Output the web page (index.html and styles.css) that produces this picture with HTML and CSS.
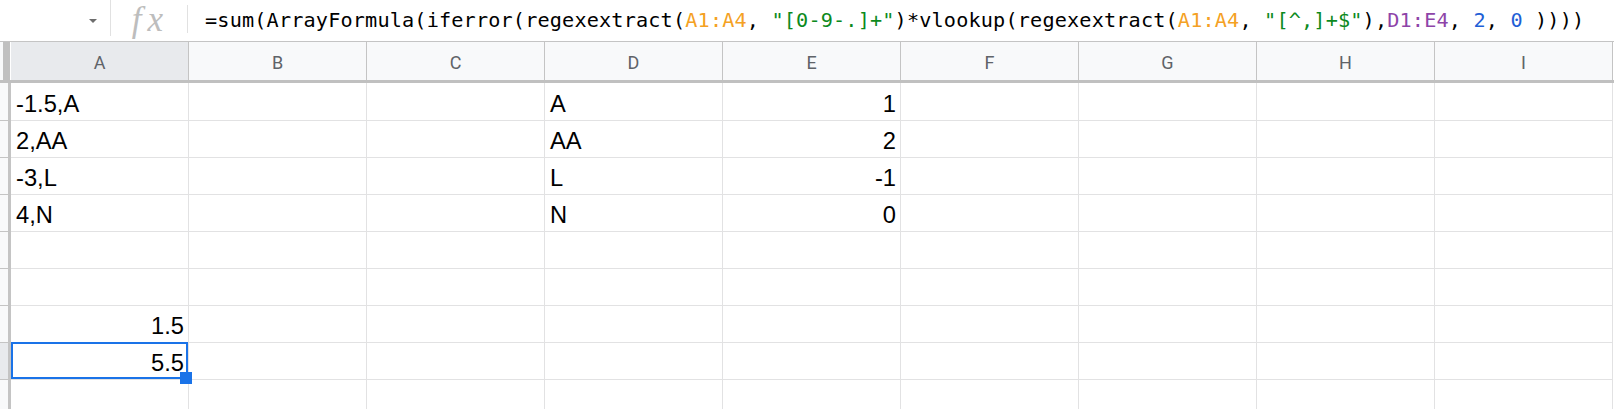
FILE: index.html
```html
<!DOCTYPE html>
<html lang="en">
<head>
    <meta charset="UTF-8">
    <title>Sheet</title>
    <link rel="stylesheet" href="styles.css">
</head>
<body>
    <div class="formula-bar">
        <div class="name-box"><span class="caret"></span></div>
        <div class="fx">fx</div>
        <div class="divider"></div>
        <div class="formula">=sum(ArrayFormula(iferror(regexextract(<b class="r1">A1:A4</b>, <b class="str">"[0-9-.]+"</b>)*vlookup(regexextract(<b class="r1">A1:A4</b>, <b class="str">"[^,]+$"</b>),<b class="r2">D1:E4</b>, <b class="num">2</b>, <b class="num">0</b> ))))</div>
    </div>

    <div class="sheet">
        <div class="row head">
            <div class="rh corner"></div>
            <div class="ch active">A</div>
            <div class="ch">B</div>
            <div class="ch">C</div>
            <div class="ch">D</div>
            <div class="ch">E</div>
            <div class="ch">F</div>
            <div class="ch">G</div>
            <div class="ch">H</div>
            <div class="ch">I</div>
        </div>
        <div class="row first">
            <div class="rh"></div>
            <div class="cell">-1.5,A</div>
            <div class="cell"></div><div class="cell"></div>
            <div class="cell">A</div>
            <div class="cell num">1</div>
            <div class="cell"></div><div class="cell"></div><div class="cell"></div><div class="cell"></div>
        </div>
        <div class="row">
            <div class="rh"></div>
            <div class="cell">2,AA</div>
            <div class="cell"></div><div class="cell"></div>
            <div class="cell">AA</div>
            <div class="cell num">2</div>
            <div class="cell"></div><div class="cell"></div><div class="cell"></div><div class="cell"></div>
        </div>
        <div class="row">
            <div class="rh"></div>
            <div class="cell">-3,L</div>
            <div class="cell"></div><div class="cell"></div>
            <div class="cell">L</div>
            <div class="cell num">-1</div>
            <div class="cell"></div><div class="cell"></div><div class="cell"></div><div class="cell"></div>
        </div>
        <div class="row">
            <div class="rh"></div>
            <div class="cell">4,N</div>
            <div class="cell"></div><div class="cell"></div>
            <div class="cell">N</div>
            <div class="cell num">0</div>
            <div class="cell"></div><div class="cell"></div><div class="cell"></div><div class="cell"></div>
        </div>
        <div class="row">
            <div class="rh"></div>
            <div class="cell"></div><div class="cell"></div><div class="cell"></div><div class="cell"></div><div class="cell"></div>
            <div class="cell"></div><div class="cell"></div><div class="cell"></div><div class="cell"></div>
        </div>
        <div class="row">
            <div class="rh"></div>
            <div class="cell"></div><div class="cell"></div><div class="cell"></div><div class="cell"></div><div class="cell"></div>
            <div class="cell"></div><div class="cell"></div><div class="cell"></div><div class="cell"></div>
        </div>
        <div class="row">
            <div class="rh"></div>
            <div class="cell num">1.5</div>
            <div class="cell"></div><div class="cell"></div><div class="cell"></div><div class="cell"></div>
            <div class="cell"></div><div class="cell"></div><div class="cell"></div><div class="cell"></div>
        </div>
        <div class="row">
            <div class="rh active"></div>
            <div class="cell num selected">5.5<div class="sel-box"><div class="handle"></div></div></div>
            <div class="cell"></div><div class="cell"></div><div class="cell"></div><div class="cell"></div>
            <div class="cell"></div><div class="cell"></div><div class="cell"></div><div class="cell"></div>
        </div>
        <div class="row">
            <div class="rh"></div>
            <div class="cell"></div><div class="cell"></div><div class="cell"></div><div class="cell"></div><div class="cell"></div>
            <div class="cell"></div><div class="cell"></div><div class="cell"></div><div class="cell"></div>
        </div>
    </div>
</body>
</html>
```

FILE: styles.css
```css
* {
    box-sizing: border-box;
}

body {
    margin: 0;
    width: 1614px;
    height: 409px;
    overflow: hidden;
    background: #fff;
    font-family: "Liberation Sans", Arial, sans-serif;
}

/* formula bar */
.formula-bar {
    display: flex;
    height: 42px;
    border-bottom: 1px solid #c4c4c4;
}

.name-box {
    width: 111px;
    height: 36px;
    border-right: 1px solid #e1e1e1;
    display: flex;
    justify-content: flex-end;
    padding: 19px 13px 0 0;
}

.caret {
    width: 0;
    height: 0;
    border-left: 4.5px solid transparent;
    border-right: 4.5px solid transparent;
    border-top: 4.5px solid #6d6d6d;
}

.fx {
    width: 76px;
    text-align: center;
    font-family: "Liberation Serif", serif;
    font-style: italic;
    font-size: 35px;
    line-height: 40px;
    letter-spacing: 6px;
    color: #bdbdbd;
    padding-left: 3px;
}

.divider {
    width: 1px;
    height: 28px;
    margin-top: 5px;
    background: #e1e1e1;
}

.formula {
    padding-left: 17px;
    font-family: "DejaVu Sans Mono", monospace;
    font-size: 20.2px;
    letter-spacing: 0.16px;
    line-height: 41px;
    color: #000;
    white-space: nowrap;
}

.formula b {
    font-weight: normal;
}

.r1 { color: #f4a124; }
.str { color: #0c8a1d; }
.r2 { color: #8e44a8; }
.num { color: #1f5fd6; }

/* grid */
.row {
    display: flex;
    height: 37px;
}

.row.first {
    height: 38px;
}

.row.head {
    height: 41px;
    border-bottom: 3px solid #c0c0c0;
}

.rh {
    width: 11px;
    flex: none;
    background: #f8f9fa;
    border-right: 3px solid #c4c4c4;
    border-bottom: 1px solid #c4c4c4;
}

.rh.active {
    background: #e8eaed;
}

.rh.corner {
    background: #c0c0c0;
    border-left: 3px solid #f8f9fa;
    border-right: 1px solid #fff;
    border-bottom: none;
}

.ch {
    width: 178px;
    flex: none;
    background: #f8f9fa;
    border-right: 1px solid #c4c4c4;
    display: flex;
    align-items: center;
    justify-content: center;
    font-family: Roboto, sans-serif;
    font-size: 18px;
    color: #5f6368;
    padding-top: 2px;
}

.ch.active {
    background: #e8eaed;
}

.cell {
    width: 178px;
    flex: none;
    position: relative;
    border-right: 1px solid #e2e2e3;
    border-bottom: 1px solid #e2e2e3;
    display: flex;
    align-items: flex-end;
    padding: 0 4px 3px 5px;
    font-size: 23.7px;
    line-height: 26px;
    color: #000;
    white-space: nowrap;
}

.cell.num {
    justify-content: flex-end;
    color: #000;
}

/* selected cell */
.sel-box {
    position: absolute;
    z-index: 2;
    top: -1px;
    left: 0;
    right: 0;
    bottom: 0;
    border: 2px solid #1a73e8;
}

.handle {
    position: absolute;
    right: -6px;
    bottom: -7px;
    width: 12px;
    height: 12px;
    background: #1a73e8;
}
```
